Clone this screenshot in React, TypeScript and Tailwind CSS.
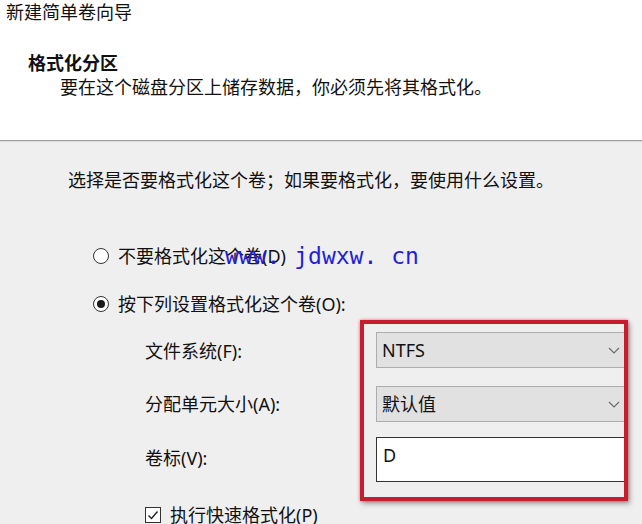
import React from "react";

const FONT = { fontFamily: '"Noto Sans", "Noto Sans CJK SC", sans-serif' };

function Chevron() {
  return (
    <svg className="w-[12px] h-[7px]" viewBox="0 0 12 7" fill="none" stroke="#6b6b6b" strokeWidth={1.2}>
      <path d="M1 1l5 5 5-5" />
    </svg>
  );
}

function Radio({ checked }: { checked?: boolean }) {
  return (
    <span className="w-[16px] h-[16px] rounded-full border-[1.5px] border-[#333] bg-white flex items-center justify-center shrink-0">
      {checked && <span className="w-[8px] h-[8px] rounded-full bg-[#1a1a1a]" />}
    </span>
  );
}

function Combo({ value }: { value: string }) {
  return (
    <div className="h-[36px] bg-[#e1e1e1] border border-r-0 border-[#adadad] flex items-center justify-between pl-[5px] pr-[4px]">
      <span className="text-[18px] leading-[24px] text-[#111]">{value}</span>
      <Chevron />
    </div>
  );
}

export default function App() {
  return (
    <div className="w-[642px] h-[524px] overflow-hidden bg-[#f0eff0] text-[#111]" style={FONT}>
      {/* header */}
      <div className="h-[140px] bg-white">
        <div className="pl-[6px] text-[18px] leading-[24px]">新建简单卷向导</div>
        <div className="pl-[28px] mt-[27px] text-[18px] leading-[24px] font-bold">格式化分区</div>
        <div className="pl-[60px] text-[18px] leading-[24px]">要在这个磁盘分区上储存数据，你必须先将其格式化。</div>
      </div>
      <div className="h-px bg-[#a0a0a0]" />
      <div className="h-px bg-[#dcdcdc]" />

      {/* body */}
      <div className="text-[18px] leading-[24px]">
        <div className="pl-[68px] pt-[26px]">选择是否要格式化这个卷；如果要格式化，要使用什么设置。</div>

        <div className="relative mt-[52px] pl-[93px] flex items-center gap-[9px]">
          <Radio />
          <span>不要格式化这个卷(D)</span>
          <span
            className="absolute left-[225px] top-[-3px] text-[23px] leading-[30px] text-[#1f1fd8]"
            style={{ fontFamily: '"DejaVu Sans Mono", monospace' }}
          >
            www. jdwxw. cn
          </span>
        </div>

        <div className="mt-[24px] pl-[93px] flex items-center gap-[9px]">
          <Radio checked />
          <span>按下列设置格式化这个卷(O):</span>
        </div>

        <div className="mt-[4px] flex">
          <div className="w-[360px] pl-[145px] pt-[19px] flex flex-col gap-[30px]">
            <span>文件系统(F):</span>
            <span className="-mt-px">分配单元大小(A):</span>
            <span>卷标(V):</span>
          </div>
          <div className="w-[268px] h-[181px] border-4 border-[#c71d2e] pl-[12px] pt-[8px] flex flex-col shadow-[2px_3px_5px_rgba(0,0,0,0.3),0_0_3px_rgba(220,40,60,0.6)]">
            <Combo value="NTFS" />
            <div className="mt-[18px]">
              <Combo value="默认值" />
            </div>
            <div className="mt-[15px] h-[45px] bg-white border border-r-0 border-[#333] pl-[6px] pt-[5px]">D</div>
          </div>
        </div>

        <div className="mt-[2px] pl-[145px] flex items-center gap-[9px]">
          <span className="w-[16px] h-[16px] border-[1.5px] border-[#333] bg-white flex items-center justify-center">
            <svg className="w-[12px] h-[12px]" viewBox="0 0 12 12" fill="none" stroke="#222" strokeWidth={1.4}>
              <path d="M1.5 6.5l3 3 6-7" />
            </svg>
          </span>
          <span>执行快速格式化(P)</span>
        </div>
      </div>
    </div>
  );
}
